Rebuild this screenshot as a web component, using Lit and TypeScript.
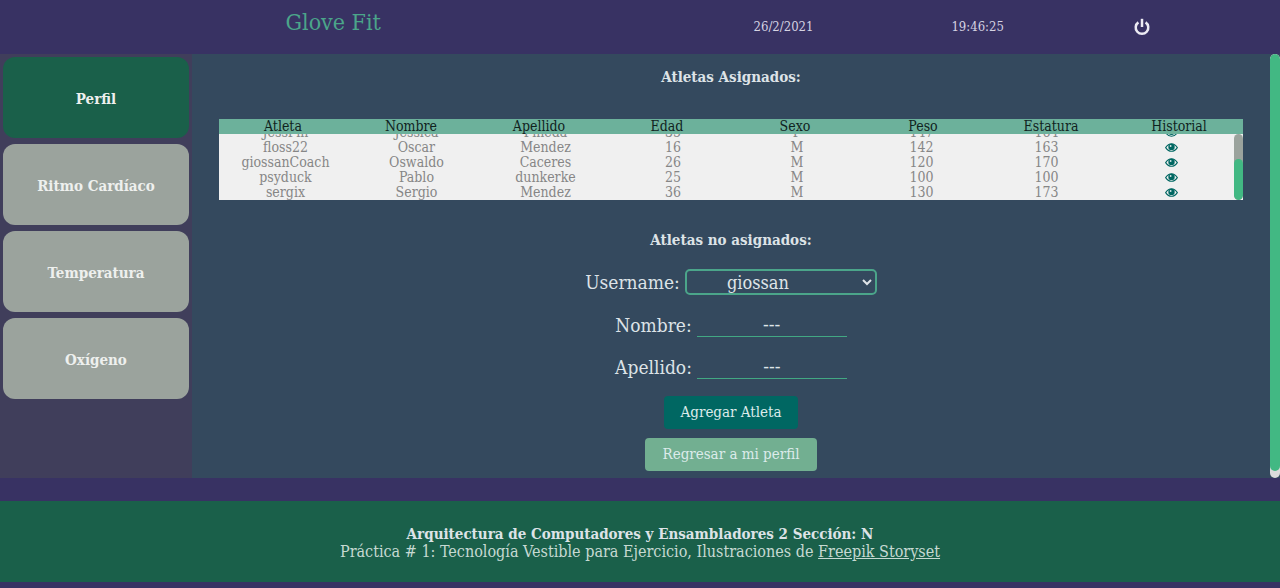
import { LitElement, html, css, svg } from "lit";
import { customElement, state } from "lit/decorators.js";

interface Athlete {
  username: string;
  name: string;
  surname: string;
  age: number;
  sex: string;
  weight: number;
  height: number;
}

const ATHLETES: Athlete[] = [
  { username: "andrea7", name: "Andrea", surname: "Lopez", age: 24, sex: "F", weight: 125, height: 160 },
  { username: "carlosm", name: "Carlos", surname: "Morales", age: 31, sex: "M", weight: 155, height: 175 },
  { username: "JessPin", name: "Jessica", surname: "Pineda", age: 35, sex: "F", weight: 147, height: 164 },
  { username: "floss22", name: "Oscar", surname: "Mendez", age: 16, sex: "M", weight: 142, height: 163 },
  { username: "giossanCoach", name: "Oswaldo", surname: "Caceres", age: 26, sex: "M", weight: 120, height: 170 },
  { username: "psyduck", name: "Pablo", surname: "dunkerke", age: 25, sex: "M", weight: 100, height: 100 },
  { username: "sergix", name: "Sergio", surname: "Mendez", age: 36, sex: "M", weight: 130, height: 173 },
];

const COLUMNS = ["Atleta", "Nombre", "Apellido", "Edad", "Sexo", "Peso", "Estatura", "Historial"];
const SECTIONS = ["Perfil", "Ritmo Cardíaco", "Temperatura", "Oxígeno"];

const eyeIcon = svg`
  <path d="M.9 6.2 C3.6 2.2 6.6 .8 9 .8 S14.4 2.2 17.1 6.2 C14.4 10.2 11.4 11.3 9 11.3 S3.6 10.2 .9 6.2Z" fill="none" stroke="currentColor" stroke-width="1.5"/>
  <circle cx="9" cy="5.2" r="4.4" fill="currentColor"/>
  <circle cx="7.8" cy="3.9" r="1.3" fill="#d5e6e4"/>`;

/** Vertical scroll indicator; offset and size are fractions of the track. */
@customElement("scroll-bar")
export class ScrollBar extends LitElement {
  static properties = { offset: { type: Number }, size: { type: Number } };
  declare offset: number;
  declare size: number;

  constructor() {
    super();
    this.offset = 0;
    this.size = 1;
  }

  static styles = css`
    :host {
      display: block;
      border-radius: 5px;
      overflow: hidden;
    }
    .thumb {
      border-radius: 5px;
      background: #42b883;
    }
    .track {
      display: flex;
      flex-direction: column;
      height: 100%;
    }
  `;

  render() {
    return html`<div class="track">
      <div style="height:${this.offset * 100}%"></div>
      <div class="thumb" style="height:${this.size * 100}%"></div>
    </div>`;
  }
}

@customElement("athlete-table")
export class AthleteTable extends LitElement {
  static styles = css`
    :host {
      display: block;
      position: relative;
    }
    .table {
      display: block;
      background: #f0f0f0;
      font-size: 14px;
      line-height: 15px;
      text-align: center;
    }
    .head {
      display: block;
      background: #6cb19b;
      color: #10231e;
    }
    .head-row {
      display: grid;
      grid-template-columns: repeat(8, 1fr);
    }
    .head-cell {
      font-weight: 400;
      padding: 0;
    }
    .body {
      display: block;
      height: 66px;
      overflow-y: scroll;
      scrollbar-width: none;
      padding-right: 9px;
      color: #868686;
    }
    .row {
      display: grid;
      grid-template-columns: 133fr 129fr 129fr 126fr 122fr 127fr 123fr 126fr;
      height: 15px;
    }
    .cell {
      padding: 0;
    }
    .view {
      display: inline-flex;
      border: 0;
      padding: 2px 0;
      background: none;
      color: #006762;
      cursor: pointer;
    }
    .eye {
      width: 13px;
      height: 9px;
    }
    .bar {
      position: absolute;
      top: 15px;
      right: 0;
      bottom: 0;
      width: 9px;
      background: #9ba39d;
    }
  `;

  @state() private offset = 0;
  @state() private size = 1;

  private measure = () => {
    const body = this.renderRoot.querySelector(".body") as HTMLElement;
    this.offset = body.scrollTop / body.scrollHeight;
    this.size = body.clientHeight / body.scrollHeight;
  };

  firstUpdated() {
    const body = this.renderRoot.querySelector(".body") as HTMLElement;
    body.scrollTop = body.scrollHeight;
    this.measure();
  }

  render() {
    return html`
      <table class="table">
        <thead class="head">
          <tr class="head-row">
            ${COLUMNS.map((c) => html`<th class="head-cell" scope="col">${c}</th>`)}
          </tr>
        </thead>
        <tbody class="body" @scroll=${this.measure}>
          ${ATHLETES.map(
            (a) => html`<tr class="row">
              <td class="cell">${a.username}</td>
              <td class="cell">${a.name}</td>
              <td class="cell">${a.surname}</td>
              <td class="cell">${a.age}</td>
              <td class="cell">${a.sex}</td>
              <td class="cell">${a.weight}</td>
              <td class="cell">${a.height}</td>
              <td class="cell">
                <button class="view" aria-label="Historial de ${a.username}">
                  <svg class="eye" viewBox="0 0 18 12">${eyeIcon}</svg>
                </button>
              </td>
            </tr>`
          )}
        </tbody>
      </table>
      <scroll-bar class="bar" .offset=${this.offset} .size=${this.size}></scroll-bar>
    `;
  }
}

@customElement("app-root")
export class AppRoot extends LitElement {
  static styles = css`
    :host {
      display: flex;
      flex-direction: column;
      min-height: 100vh;
      background: #383263;
      color: #dde3e7;
      font-family: "DejaVu Serif Condensed", "DejaVu Serif", serif;
      font-size: 15px;
      line-height: 17px;
    }
    * {
      box-sizing: border-box;
    }
    .topbar {
      display: grid;
      grid-template-columns: 666fr 234fr 154fr 174fr;
      padding: 8px 4% 0 0;
      height: 54px;
      text-align: center;
    }
    .brand {
      margin: 0;
      font-size: 23px;
      line-height: 28px;
      font-weight: 400;
      color: #4ba58a;
    }
    .stamp {
      padding-top: 10px;
      font-size: 13px;
      color: #d5d3e2;
    }
    .power {
      justify-self: center;
      align-self: start;
      display: flex;
      margin-top: 10px;
      border: 0;
      padding: 0;
      background: none;
      color: #ecebf3;
      cursor: pointer;
    }
    .power-icon {
      width: 18px;
      height: 18px;
    }
    .middle {
      display: grid;
      grid-template-columns: 15% 1fr 10px;
      height: 424px;
      background: #34495e;
    }
    .sidebar {
      display: flex;
      flex-direction: column;
      gap: 6px;
      padding: 3px;
      background: #403e5b;
    }
    .tab {
      height: 81px;
      border: 0;
      border-radius: 12px;
      padding: 4px 0 0;
      background: #9ba39d;
      color: #eef0ee;
      font: inherit;
      font-weight: 700;
      cursor: pointer;
    }
    .tab.active {
      background: #1a604a;
    }
    .content {
      overflow-y: scroll;
      scrollbar-width: none;
    }
    .page-bar {
      background: #dcdcdc;
    }
    .inner {
      display: flex;
      flex-direction: column;
      align-items: center;
      padding: 15px 0 14px;
    }
    .title {
      margin: 0;
      font-size: 15px;
      line-height: 17px;
      font-weight: 700;
    }
    .assigned {
      width: 95%;
      margin: 33px 0 32px;
    }
    .form {
      display: flex;
      flex-direction: column;
      align-items: center;
      width: 100%;
      padding-top: 20px;
    }
    .field {
      display: flex;
      align-items: center;
      gap: 5px;
      font-size: 19px;
      line-height: 24px;
      margin-bottom: 17px;
    }
    .select {
      width: 192px;
      height: 26px;
      border: 2px solid #4ba58a;
      border-radius: 5px;
      padding: 0 34px 0 0;
      background: #34495e;
      color: #dfe4e8;
      font: inherit;
      font-size: 18px;
      text-align: center;
      text-align-last: center;
    }
    .input {
      width: 150px;
      height: 25px;
      border: 0;
      border-bottom: 1px solid #42a883;
      padding: 0;
      background: none;
      color: #dfe4e8;
      font: inherit;
      text-align: center;
    }
    .action {
      height: 33px;
      margin-bottom: 9px;
      border: 0;
      border-radius: 4px;
      padding: 0 17px;
      background: #006762;
      color: #dcebea;
      font: inherit;
      cursor: pointer;
    }
    .action.back {
      margin-bottom: 0;
      background: #72af91;
    }
    .footer {
      margin: 23px 0 5px;
      padding: 25px 16px 22px;
      background: #1a604a;
      text-align: center;
    }
    .line {
      margin: 0;
    }
    .credits {
      font-size: 16px;
      color: #c6d9d2;
    }
    .link {
      color: inherit;
    }
  `;

  @state() private active = 0;
  @state() private offset = 0;
  @state() private size = 1;

  private measure = () => {
    const content = this.renderRoot.querySelector(".content") as HTMLElement;
    this.offset = content.scrollTop / content.scrollHeight;
    this.size = content.clientHeight / content.scrollHeight;
  };

  firstUpdated() {
    new ResizeObserver(this.measure).observe(this.renderRoot.querySelector(".inner")!);
  }

  render() {
    return html`
      <header class="topbar">
        <h1 class="brand">Glove Fit</h1>
        <time class="stamp">26/2/2021</time>
        <time class="stamp">19:46:25</time>
        <button class="power" aria-label="Cerrar sesión">
          <svg class="power-icon" viewBox="0 0 18 18" fill="none" stroke="currentColor" stroke-width="2.5">
            <path d="M5.4 4.4 A6.3 6.3 0 1 0 12.6 4.4" />
            <path d="M9 .8 V9" />
          </svg>
        </button>
      </header>
      <div class="middle">
        <nav class="sidebar">
          ${SECTIONS.map(
            (s, i) => html`<button
              class=${i === this.active ? "tab active" : "tab"}
              @click=${() => (this.active = i)}
            >${s}</button>`
          )}
        </nav>
        <main class="content" @scroll=${this.measure}>
          <div class="inner">
            <h2 class="title">Atletas Asignados:</h2>
            <athlete-table class="assigned"></athlete-table>
            <h2 class="title">Atletas no asignados:</h2>
            <form class="form" @submit=${(e: Event) => e.preventDefault()}>
              <div class="field">
                <label for="username">Username:</label>
                <select class="select" id="username">
                  <option>giossan</option>
                </select>
              </div>
              <div class="field">
                <label for="name">Nombre:</label>
                <input class="input" id="name" value="---" readonly />
              </div>
              <div class="field">
                <label for="surname">Apellido:</label>
                <input class="input" id="surname" value="---" readonly />
              </div>
              <button class="action" type="submit">Agregar Atleta</button>
              <button class="action back" type="button">Regresar a mi perfil</button>
            </form>
          </div>
        </main>
        <scroll-bar class="page-bar" .offset=${this.offset} .size=${this.size}></scroll-bar>
      </div>
      <footer class="footer">
        <p class="line"><strong>Arquitectura de Computadores y Ensambladores 2 Sección: N</strong></p>
        <p class="line credits">
          Práctica # 1: Tecnología Vestible para Ejercicio, Ilustraciones de
          <a class="link" href="#storyset">Freepik Storyset</a>
        </p>
      </footer>
    `;
  }
}
